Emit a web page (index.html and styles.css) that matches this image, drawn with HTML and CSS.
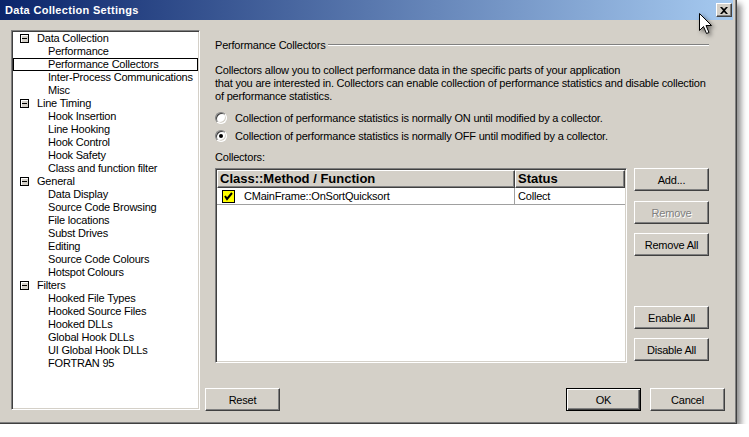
FILE: index.html
```html
<!DOCTYPE html>
<html>
<head>
<meta charset="utf-8">
<link rel="stylesheet" href="styles.css">
</head>
<body>
<div class="window">
  <div class="titlebar">
    <span class="title">Data Collection Settings</span>
    <span class="close"><svg width="8" height="7" viewBox="0 0 8 7"><path d="M0 0h2l2 2 2-2h2L5 3.5 8 7H6L4 5 2 7H0l3-3.5z" fill="#000"/></svg></span>
  </div>
  <div class="client">
    <div class="tree">
      <div class="node parent"><span class="exp"></span>Data Collection</div>
      <div class="node child">Performance</div>
      <div class="node child selected">Performance Collectors</div>
      <div class="node child">Inter-Process Communications</div>
      <div class="node child">Misc</div>
      <div class="node parent"><span class="exp"></span>Line Timing</div>
      <div class="node child">Hook Insertion</div>
      <div class="node child">Line Hooking</div>
      <div class="node child">Hook Control</div>
      <div class="node child">Hook Safety</div>
      <div class="node child">Class and function filter</div>
      <div class="node parent"><span class="exp"></span>General</div>
      <div class="node child">Data Display</div>
      <div class="node child">Source Code Browsing</div>
      <div class="node child">File locations</div>
      <div class="node child">Subst Drives</div>
      <div class="node child">Editing</div>
      <div class="node child">Source Code Colours</div>
      <div class="node child">Hotspot Colours</div>
      <div class="node parent"><span class="exp"></span>Filters</div>
      <div class="node child">Hooked File Types</div>
      <div class="node child">Hooked Source Files</div>
      <div class="node child">Hooked DLLs</div>
      <div class="node child">Global Hook DLLs</div>
      <div class="node child">UI Global Hook DLLs</div>
      <div class="node child">FORTRAN 95</div>
    </div>
    <div class="right">
      <div class="pane">
        <div class="group"><span class="gtitle">Performance Collectors</span><span class="etch"></span></div>
        <p class="desc">Collectors allow you to collect performance data in the specific parts of your application<br>that you are interested in. Collectors can enable collection of performance statistics and disable collection<br>of performance statistics.</p>
        <div class="radio first"><span class="rb"></span>Collection of performance statistics is normally ON until modified by a collector.</div>
        <div class="radio"><span class="rb checked"></span>Collection of performance statistics is normally OFF until modified by a collector.</div>
        <div class="lbl">Collectors:</div>
        <div class="listarea">
          <div class="list">
            <div class="lhead"><div class="hc c1">Class::Method / Function</div><div class="hc c2">Status</div></div>
            <div class="lrow">
              <div class="cell c1"><svg class="chk" width="13" height="13" viewBox="0 0 13 13"><rect x="0.5" y="0.5" width="12" height="12" fill="#ffff00" stroke="#000"/><path d="M3 6l2 3 5-6" fill="none" stroke="#000" stroke-width="2"/></svg>CMainFrame::OnSortQuicksort</div>
              <div class="cell c2">Collect</div>
            </div>
          </div>
          <div class="btncol">
            <button class="btn">Add...</button>
            <button class="btn disabled gap10">Remove</button>
            <button class="btn gap9">Remove All</button>
            <button class="btn gap50">Enable All</button>
            <button class="btn gap9">Disable All</button>
          </div>
        </div>
      </div>
      <div class="footer">
        <button class="btn">Reset</button>
        <span class="spacer"></span>
        <button class="btn default">OK</button>
        <button class="btn cancel">Cancel</button>
      </div>
    </div>
  </div>
  <svg class="cursor" width="16" height="26" viewBox="0 0 16 26"><path d="M1.5 1.5v17l4-4 3 7 2.5-1-3-7h5.5z" fill="#fff" stroke="#000" stroke-width="1"/></svg>
</div>
</body>
</html>
```
FILE: styles.css
```css
html, body {
  margin: 0;
  padding: 0;
  background: #ffffff;
}
body {
  font-family: "Liberation Sans", Arial, sans-serif;
  font-size: 11px;
  letter-spacing: -0.2px;
  color: #000;
}
.window {
  position: relative;
  width: 737px;
  height: 424px;
  box-sizing: border-box;
  background: #d4d0c8;
  border-right: 1px solid #404040;
  border-bottom: 1px solid #404040;
  box-shadow: inset -1px -1px 0 #808080, 4px 4px 6px rgba(0,0,0,0.45);
}
.titlebar {
  height: 20px;
  margin-right: 3px;
  display: flex;
  align-items: center;
  padding-left: 5px;
  background: linear-gradient(to right, #0a246a, #a6caf0);
}
.title {
  color: #fff;
  font-weight: bold;
  font-size: 11px;
  letter-spacing: 0.3px;
}
.close {
  margin-left: auto;
  margin-right: 1px;
  width: 16px;
  height: 14px;
  box-sizing: border-box;
  background: #d4d0c8;
  border: 1px solid;
  border-color: #fff #404040 #404040 #fff;
  box-shadow: inset -1px -1px 0 #808080;
  display: flex;
  align-items: center;
  justify-content: center;
}
.close svg { display: block; }
.client {
  display: flex;
  padding-left: 11px;
  padding-top: 10px;
}
.tree {
  width: 189px;
  height: 380px;
  box-sizing: border-box;
  background: #fff;
  border: 1px solid;
  border-color: #808080 #fff #fff #808080;
  box-shadow: inset 1px 1px 0 #404040, inset -1px -1px 0 #d4d0c8;
  padding: 1px;
}
.node {
  height: 13px;
  line-height: 13px;
  white-space: nowrap;
  box-sizing: border-box;
  display: flex;
  align-items: center;
}
.node.parent { padding-left: 7px; }
.node.child { padding-left: 35px; }
.node.selected {
  outline: 1px solid #000;
  outline-offset: -1px;
}
.exp {
  position: relative;
  width: 9px;
  height: 9px;
  box-sizing: border-box;
  border: 1px solid #000;
  background: #d4d0c8;
  box-shadow: inset 1px 1px 0 #fff;
  margin-right: 8px;
  flex: none;
}
.exp::after {
  content: "";
  position: absolute;
  left: 1px;
  top: 3px;
  width: 5px;
  height: 1px;
  background: #000;
}
.right {
  margin-left: 5px;
  width: 520px;
  display: flex;
  flex-direction: column;
}
.pane {
  padding: 8px 16px 0 10px;
}
.group {
  display: flex;
  align-items: center;
  height: 14px;
  line-height: 14px;
}
.gtitle { white-space: nowrap; }
.etch {
  flex: 1;
  margin-left: 2px;
  height: 1px;
  background: #808080;
  border-bottom: 1px solid #fff;
}
.desc {
  margin: 12px 0 0 0;
  line-height: 13px;
  white-space: nowrap;
}
.radio {
  display: flex;
  align-items: center;
  height: 18px;
  white-space: nowrap;
}
.radio.first { margin-top: 6px; }
.rb {
  position: relative;
  width: 12px;
  height: 12px;
  box-sizing: border-box;
  border-radius: 50%;
  background: #fff;
  border: 1px solid;
  border-color: #808080 #fff #fff #808080;
  box-shadow: inset 1px 1px 0 #404040, inset -1px -1px 0 #d4d0c8;
  margin-right: 8px;
  flex: none;
}
.rb.checked::after {
  content: "";
  position: absolute;
  left: 3px;
  top: 3px;
  width: 4px;
  height: 4px;
  border-radius: 50%;
  background: #000;
}
.lbl {
  margin-top: 6px;
  line-height: 13px;
}
.listarea {
  margin-top: 4px;
  display: flex;
  height: 195px;
}
.list {
  width: 412px;
  height: 195px;
  box-sizing: border-box;
  background: #fff;
  border: 1px solid;
  border-color: #808080 #fff #fff #808080;
  box-shadow: inset 1px 1px 0 #404040, inset -1px -1px 0 #d4d0c8;
  padding: 1px;
}
.lhead {
  display: flex;
  height: 18px;
}
.hc {
  box-sizing: border-box;
  height: 18px;
  line-height: 16px;
  background: #d4d0c8;
  font-weight: bold;
  font-size: 13px;
  letter-spacing: 0;
  padding-left: 2px;
  border: 1px solid;
  border-color: #fff #404040 #404040 #fff;
  box-shadow: inset -1px -1px 0 #808080;
  white-space: nowrap;
}
.c1 { width: 298px; }
.c2 { flex: 1; }
.lrow {
  display: flex;
  height: 17px;
  border-bottom: 1px solid #a0a0a0;
  box-sizing: border-box;
}
.cell {
  box-sizing: border-box;
  display: flex;
  align-items: center;
  white-space: nowrap;
}
.cell.c1 {
  border-right: 1px solid #a0a0a0;
  padding-left: 5px;
}
.cell.c2 { padding-left: 3px; }
.chk {
  display: block;
  margin-right: 9px;
  flex: none;
}
.btncol {
  margin-left: 7px;
  width: 75px;
  display: flex;
  flex-direction: column;
}
.btn {
  width: 75px;
  height: 23px;
  box-sizing: border-box;
  padding: 0;
  margin: 0;
  font-family: "Liberation Sans", Arial, sans-serif;
  font-size: 11px;
  letter-spacing: inherit;
  color: #000;
  background: #d4d0c8;
  border: 1px solid;
  border-color: #fff #404040 #404040 #fff;
  box-shadow: inset -1px -1px 0 #808080;
  border-radius: 0;
}
.btn.gap10 { margin-top: 10px; }
.btn.gap9 { margin-top: 9px; }
.btn.gap50 { margin-top: 50px; }
.btn.disabled {
  color: #808080;
  text-shadow: 1px 1px 0 #fff;
}
.btn.default {
  border-color: #000;
  box-shadow: inset 1px 1px 0 #fff, inset -1px -1px 0 #404040, inset -2px -2px 0 #808080;
}
.btn.cancel { margin-left: 9px; }
.footer {
  display: flex;
  margin-top: 25px;
}
.spacer { flex: 1; }
.cursor {
  position: absolute;
  left: 698px;
  top: 12px;
  filter: drop-shadow(2px 2px 2px rgba(0,0,0,0.5));
}
```
